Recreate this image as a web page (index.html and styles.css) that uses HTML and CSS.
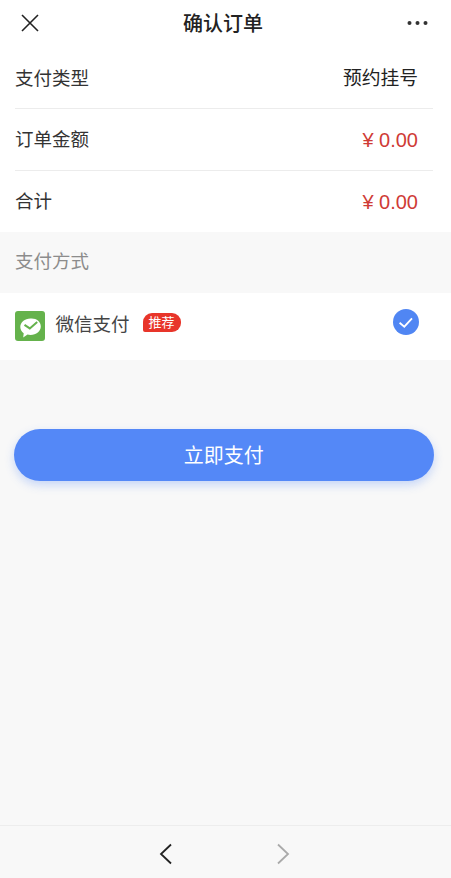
FILE: index.html
```html
<!DOCTYPE html>
<html lang="zh">
<head>
<meta charset="utf-8">
<title>确认订单</title>
<link rel="stylesheet" href="styles.css">
</head>
<body>
<div class="page">
  <header class="nav">
    <svg class="nav-close" width="20" height="20" viewBox="0 0 20 20"><path d="M2 2 18 18M18 2 2 18" stroke="#222" stroke-width="1.600" fill="none"/></svg>
    <h1 class="nav-title">确认订单</h1>
    <svg class="nav-more" width="21" height="6" viewBox="0 0 21 6"><circle cx="2.500" cy="3" r="2" fill="#333"/><circle cx="10.500" cy="3" r="2" fill="#333"/><circle cx="18.500" cy="3" r="2" fill="#333"/></svg>
  </header>
  <section class="summary">
    <div class="row"><span>支付类型</span><span class="value">预约挂号</span></div>
    <div class="row row-mid"><span>订单金额</span><span class="price">¥ 0.00</span></div>
    <div class="row"><span>合计</span><span class="price">¥ 0.00</span></div>
  </section>
  <div class="section-label">支付方式</div>
  <section class="pay">
    <svg class="wechat" width="30" height="30" viewBox="0 0 30 30">
      <rect width="30" height="30" rx="3" fill="#65b24c"/>
      <path d="M15.500 7.500c-5.800 0-10.200 3.700-10.200 8.500 0 2.600 1.300 4.800 3.400 6.300l-.5 4.200 4.300-2.900c.9.200 1.900.3 3 .3 5.800 0 10.300-3.700 10.300-8.500s-4.500-8.400-10.300-7.900z" fill="#fff"/>
      <path d="M9.500 13.800 14.800 17.400 22.200 11" stroke="#65b24c" stroke-width="2" fill="none"/>
    </svg>
    <span class="pay-name">微信支付</span>
    <span class="badge">推荐</span>
    <svg class="check" width="26" height="26" viewBox="0 0 26 26"><circle cx="13" cy="13" r="13" fill="#5086f3"/><path d="M6.600 13.700 11.300 17.700 19 9.300" stroke="#fff" stroke-width="1.800" fill="none"/></svg>
  </section>
  <div class="action"><button class="pay-btn">立即支付</button></div>
  <footer class="toolbar">
    <svg width="16" height="24" viewBox="0 0 16 24"><path d="M13 2.500 3 12 13 21.500" stroke="#222" stroke-width="1.800" fill="none"/></svg>
    <svg width="16" height="24" viewBox="0 0 16 24"><path d="M3 2.500 13 12 3 21.500" stroke="#aaa" stroke-width="1.800" fill="none"/></svg>
  </footer>
</div>
</body>
</html>
```
FILE: styles.css
```css
* { box-sizing: border-box; }
html, body { margin: 0; height: 100%; }
body {
  font-family: "Noto Sans CJK SC", "Liberation Sans", sans-serif;
  background: #f8f8f8;
  color: #333;
  overflow: hidden;
}
.page { height: 878px; display: flex; flex-direction: column; }
.nav {
  height: 48px;
  background: #fff;
  display: flex;
  align-items: center;
  justify-content: space-between;
  padding: 0 23px 2px 20px;
  flex: none;
}
.nav-title { margin: 0 0 0 -1px; font-size: 20px; font-weight: 500; color: #222; line-height: 26px; }
.summary { background: #fff; flex: none; padding-left: 15px; }
.row {
  height: 61px;
  display: flex;
  align-items: center;
  justify-content: space-between;
  font-size: 18.500px;
  margin-right: 18px;
  padding: 0 15px 3px 0;
  border-bottom: 1px solid #ececec;
}
.row-mid { height: 62px; }
.row:last-child { border-bottom: none; height: 61px; }
.value { color: #222; font-size: 18.800px; }
.price { color: #cf3b36; font-family: "Liberation Sans", sans-serif; font-size: 20px; margin-top: 4px; }
.section-label {
  height: 61px;
  padding: 0 0 6px 15px;
  display: flex;
  align-items: center;
  font-size: 18.500px;
  color: #8c8c8c;
  flex: none;
}
.pay {
  height: 67px;
  background: #fff;
  display: flex;
  align-items: center;
  padding: 0 32px 0 15px;
  flex: none;
}
.wechat { flex: none; margin: 0 0 1px -0.500px; }
.pay-name { margin-left: 11px; font-size: 18.500px; color: #444; margin-bottom: 7px; }
.badge {
  margin-left: 13px;
  margin-bottom: 9px;
  height: 19px;
  width: 38px;
  background: #e8352a;
  color: #fff;
  font-size: 13px;
  line-height: 18px;
  text-align: center;
  border-radius: 9px 9px 9px 2px;
}
.check { margin-left: auto; margin-bottom: 9px; }
.action { padding: 69px 17.500px 0 14px; flex: 1; }
.pay-btn {
  display: block;
  width: 100%;
  height: 52px;
  border: 0;
  border-radius: 26px;
  background: #5488f7;
  color: #fff;
  font-family: inherit;
  font-size: 20px;
  padding-bottom: 3px;
  box-shadow: 0 4px 10px rgba(84, 136, 247, .3);
}
.toolbar {
  height: 53px;
  flex: none;
  border-top: 1px solid #ededed;
  display: flex;
  align-items: center;
  justify-content: center;
  gap: 101px;
  padding: 3px 3px 0 0;
}
```
